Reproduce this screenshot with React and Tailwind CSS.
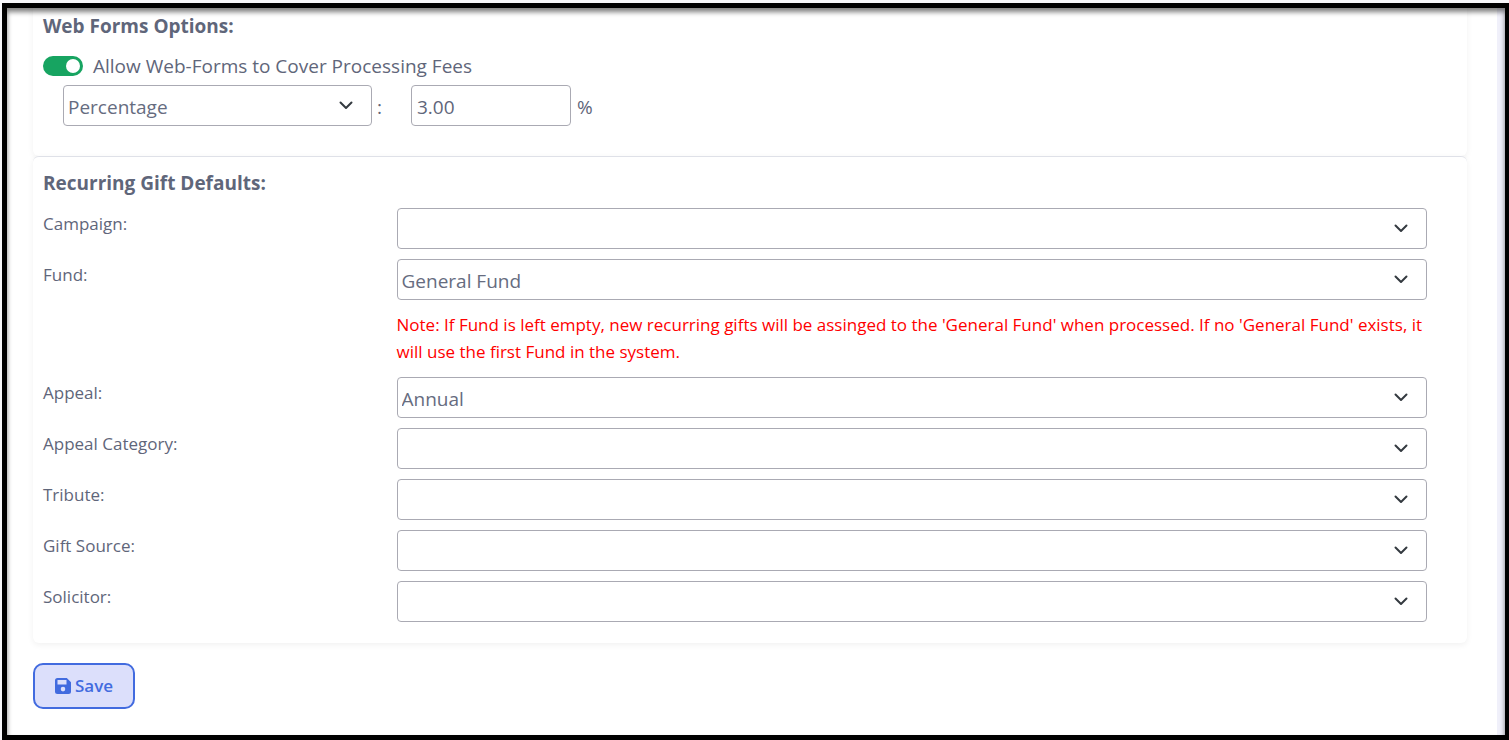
import { useState } from "react";

const recurringFields = [
  { id: "campaign", label: "Campaign:", value: "" },
  {
    id: "fund",
    label: "Fund:",
    value: "General Fund",
    note: "Note: If Fund is left empty, new recurring gifts will be assinged to the 'General Fund' when processed. If no 'General Fund' exists, it will use the first Fund in the system.",
  },
  { id: "appeal", label: "Appeal:", value: "Annual" },
  { id: "appeal-category", label: "Appeal Category:", value: "" },
  { id: "tribute", label: "Tribute:", value: "" },
  { id: "gift-source", label: "Gift Source:", value: "" },
  { id: "solicitor", label: "Solicitor:", value: "" },
];

function SelectBox({ id, label, options }) {
  return (
    <div className="relative">
      <select
        id={id}
        aria-label={label}
        className="block h-[41px] w-full appearance-none rounded-[4px] border border-[#aaaab3] bg-white pl-1 pr-12 pt-[3px] text-[19px] text-[#666c7f]"
      >
        {options.map((option) => (
          <option key={option}>{option}</option>
        ))}
      </select>
      <svg
        viewBox="0 0 16 16"
        className="pointer-events-none absolute right-[18px] top-3 h-4 w-4"
        fill="none"
        stroke="#343a40"
        strokeWidth="2"
        strokeLinecap="round"
        strokeLinejoin="round"
      >
        <path d="m2.500 5.500 5.500 5.500 5.500-5.500" />
      </svg>
    </div>
  );
}

function WebFormsOptions() {
  const [coverFees, setCoverFees] = useState(true);

  return (
    <section className="h-[156px] rounded-b-md bg-white px-[10px] pt-3 shadow-[0_2px_6px_rgba(0,0,0,0.06)]">
      <h2 className="text-[19px] font-bold leading-7">Web Forms Options:</h2>
      <label className="mt-3 flex h-7 items-center gap-[10px] text-[19px]">
        <input
          type="checkbox"
          role="switch"
          checked={coverFees}
          onChange={(e) => setCoverFees(e.target.checked)}
          className="peer sr-only"
        />
        <span className="flex h-5 w-10 items-center rounded-full bg-gray-300 px-[3px] peer-checked:justify-end peer-checked:bg-[#17a461]">
          <span className="h-[14px] w-[14px] rounded-full bg-white" />
        </span>
        Allow Web-Forms to Cover Processing Fees
      </label>
      <div className="ml-5 mt-[5px] flex items-center text-[19px]">
        <div className="w-[309px]">
          <SelectBox id="fee-type" label="Fee type" options={["Percentage", "Fixed Amount"]} />
        </div>
        <span className="w-[39px] pl-[5px] pt-[3px]">:</span>
        <input
          type="text"
          aria-label="Fee amount"
          defaultValue="3.00"
          className="h-[41px] w-40 rounded-[4px] border border-[#aaaab3] bg-white px-[5px] pt-[3px]"
        />
        <span className="pl-[6px] pt-[3px]">%</span>
      </div>
    </section>
  );
}

function RecurringGiftDefaults() {
  return (
    <section className="rounded-md border-t border-[#dfe1e8] bg-white px-[10px] pb-[21px] pt-3 shadow-[0_2px_6px_rgba(0,0,0,0.06)]">
      <h2 className="text-[19px] font-bold leading-7">Recurring Gift Defaults:</h2>
      <div className="mt-[11px] flex flex-col gap-[10px]">
        {recurringFields.map((field) => (
          <div key={field.id} className="grid grid-cols-4">
            <label htmlFor={field.id} className="pt-1 text-[17px] leading-6">
              {field.label}
            </label>
            <div className="col-span-3 pr-[30px]">
              <SelectBox id={field.id} options={[field.value]} />
              {field.note && (
                <p className="mb-[2px] mt-[11px] text-[17px] leading-[27px] text-[#ff0000]">
                  {field.note}
                </p>
              )}
            </div>
          </div>
        ))}
      </div>
    </section>
  );
}

export default function App() {
  return (
    <div className="relative flex min-h-screen bg-[#f0f0fa] font-['Open_Sans',sans-serif] text-[#5f667a]">
      <main className="mr-3 flex-1 bg-white pb-[29px] pl-[33px] pr-[30px]">
        <WebFormsOptions />
        <RecurringGiftDefaults />
        <button
          type="button"
          className="mt-5 flex h-[46px] items-center gap-1 rounded-[10px] border-2 border-[#426bdf] bg-[#dcdffb] px-5 text-[17px] font-semibold text-[#426bdf]"
        >
          <svg viewBox="0 0 16 16" className="h-4 w-4" fill="currentColor" fillRule="evenodd">
            <path d="M2.500 0h9.300L16 4.200v9.300a2.500 2.500 0 0 1-2.500 2.500h-11A2.500 2.500 0 0 1 0 13.500v-11A2.500 2.500 0 0 1 2.500 0ZM2.500 2v4.500h9V2ZM8 8.800a2.300 2.300 0 1 0 0 4.600 2.300 2.300 0 0 0 0-4.600Z" />
          </svg>
          Save
        </button>
      </main>

      {/* window frame with its inner shadow */}
      <div className="pointer-events-none absolute inset-0 border-l-2 border-t-[3px] border-[#f7f7fa]">
        <div className="h-full border-[5px] border-r-4 border-black shadow-[inset_0_4px_5px_rgba(0,0,0,0.5)]" />
      </div>
    </div>
  );
}
